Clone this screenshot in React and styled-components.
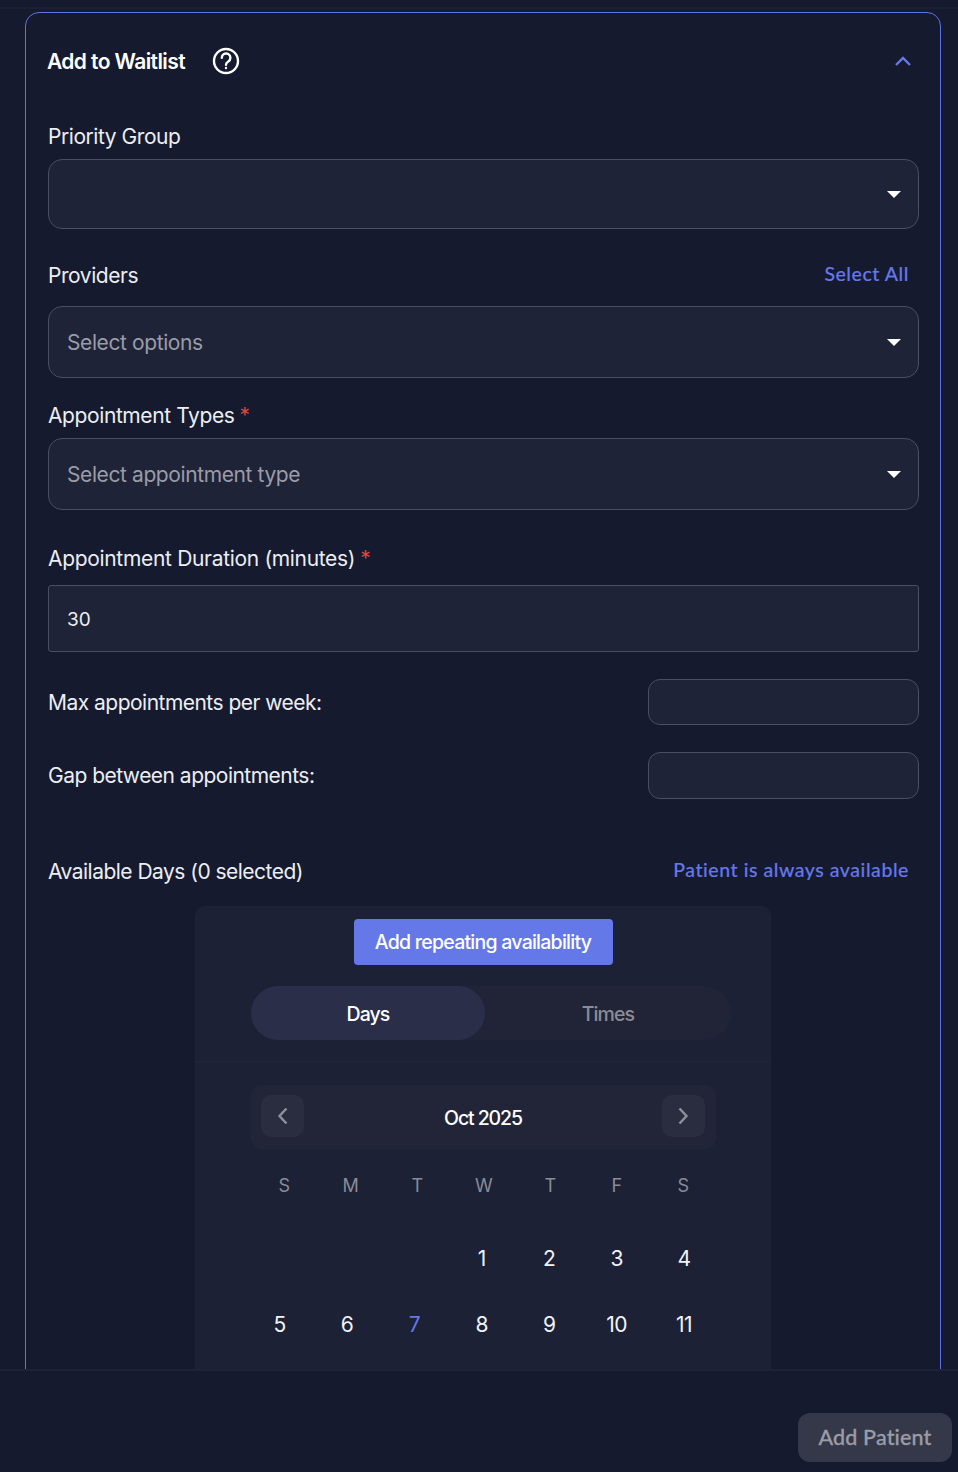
import React from "react";
import styled, { createGlobalStyle } from "styled-components";

const GlobalStyle = createGlobalStyle`
  html, body {
    margin: 0;
    padding: 0;
    background: #151a2f;
    font-family: Inter, "Liberation Sans", sans-serif;
  }
  * { box-sizing: border-box; }
`;

const Page = styled.div`
  width: 958px;
  height: 1472px;
  display: flex;
  flex-direction: column;
  background: #151a2f;
  overflow: hidden;
`;

const Scroll = styled.div`
  height: 1371px;
  flex: none;
  overflow: hidden;
  padding: 12px 17px 0 25px;
  border-bottom: 2px solid #1e2236;
  position: relative;
  &::before {
    content: "";
    position: absolute;
    top: 7px;
    left: 0;
    right: 0;
    height: 2px;
    background: #1b2034;
  }
`;

const Panel = styled.section`
  width: 916px;
  border: 1px solid #5e73e6;
  border-radius: 14px;
  padding: 0 21px 0 22px;
`;

const Header = styled.div`
  height: 96px;
  display: flex;
  align-items: center;
  justify-content: space-between;
  padding-right: 8px;
`;

const TitleWrap = styled.div`
  display: flex;
  align-items: center;
  gap: 27px;
`;

const Title = styled.h2`
  margin: 0 0 0 -1px;
  font-size: 21px;
  font-weight: 600;
  letter-spacing: -0.6px;
  color: #fff;
`;

const LabelRow = styled.div`
  display: flex;
  align-items: center;
  justify-content: space-between;
  height: 24px;
  margin-top: ${(p) => p.$top}px;
  margin-bottom: ${(p) => p.$bottom}px;
  padding-right: 10px;
`;

const Label = styled.label`
  font-size: 21px;
  letter-spacing: ${(p) => p.$spacing || -0.52}px;
  color: #eceef2;
  white-space: nowrap;
`;

const Star = styled.span`
  color: #d9473f;
  margin-left: 5px;
`;

const LinkText = styled.a`
  margin-top: -4px;
  font-family: Lato, Inter, sans-serif;
  font-size: 19.5px;
  font-weight: 500;
  letter-spacing: 0.55px;
  -webkit-text-stroke: 0.15px #6478e8;
  color: #6478e8;
`;

const Select = styled.div`
  height: ${(p) => p.$height}px;
  display: flex;
  align-items: center;
  justify-content: space-between;
  padding: 1px 17px 0 18px;
  background: #1f2337;
  border: 1px solid #4b4d60;
  border-radius: 14px;
  font-size: 21px;
  letter-spacing: -0.4px;
  color: #9a9ca8;
`;

const Caret = styled.span`
  width: 0;
  height: 0;
  margin-top: -1px;
  border-left: 7px solid transparent;
  border-right: 7px solid transparent;
  border-top: 7px solid #fff;
`;

const DurationInput = styled.div`
  height: 67px;
  display: flex;
  align-items: center;
  padding: 1px 0 0 18px;
  background: #1f2337;
  border: 1px solid #4b4d60;
  border-radius: 3px;
  font-size: 19px;
  color: #eceef2;
`;

const InlineField = styled.div`
  display: flex;
  align-items: center;
  justify-content: space-between;
  height: ${(p) => p.$height}px;
  margin-top: ${(p) => p.$top}px;
`;

const SmallInput = styled.div`
  width: 271px;
  height: 100%;
  background: #1f2337;
  border: 1px solid #4b4d60;
  border-radius: 12px;
`;

const Card = styled.div`
  width: 576px;
  margin: 23px auto 0 147px;
  padding: 12px 0 120px;
  background: #1c2135;
  border: 1px solid #1f2338;
  border-radius: 10px;
`;

const AddButton = styled.button`
  display: block;
  width: 259px;
  height: 46px;
  margin: 0 auto;
  border: none;
  border-radius: 4px;
  background: #6478e8;
  color: #fff;
  font-family: inherit;
  font-size: 19.5px;
  font-weight: 500;
  letter-spacing: -0.75px;
`;

const Tabs = styled.div`
  width: 480px;
  height: 54px;
  margin: 21px 0 0 55px;
  display: grid;
  grid-template-columns: 234px 1fr;
  background: #212437;
  border-radius: 27px;
`;

const Tab = styled.div`
  display: flex;
  align-items: center;
  justify-content: center;
  padding-top: 2px;
  border-radius: 27px;
  font-size: 19.5px;
  font-weight: 500;
  letter-spacing: -0.9px;
  background: ${(p) => (p.$active ? "#2a2e49" : "transparent")};
  color: ${(p) => (p.$active ? "#fff" : "#8a8c98")};
`;

const Divider = styled.div`
  height: 2px;
  margin-top: 21px;
  background: #20243a;
`;

const MonthBar = styled.div`
  width: 465px;
  height: 64px;
  margin: 22px 0 0 55px;
  padding: 0 11px 0 10px;
  display: flex;
  align-items: center;
  justify-content: space-between;
  background: #222538;
  border-radius: 10px;
`;

const NavButton = styled.div`
  width: 43px;
  height: 42px;
  margin-top: -2px;
  display: flex;
  align-items: center;
  justify-content: center;
  background: #2a2d40;
  border-radius: 10px;
  color: #8d8f9b;
`;

const MonthName = styled.div`
  padding-top: 2px;
  font-size: 19.5px;
  font-weight: 500;
  letter-spacing: -1.1px;
  color: #fff;
`;

const WeekRow = styled.div`
  width: 465px;
  margin: 25px 0 0 55px;
  display: grid;
  grid-template-columns: repeat(7, 66.5px);
`;

const WeekDay = styled.div`
  text-align: center;
  font-size: 18px;
  line-height: 24px;
  color: #8a8c98;
`;

const DateGrid = styled.div`
  width: 472px;
  margin: 27px 0 0 50px;
  display: grid;
  grid-template-columns: repeat(7, 67.4px);
  grid-auto-rows: 66px;
`;

const DateCell = styled.div`
  display: flex;
  align-items: center;
  justify-content: center;
  font-size: 21px;
  letter-spacing: -0.5px;
  color: ${(p) => (p.$today ? "#6478e8" : "#f2f3f6")};
`;

const Footer = styled.footer`
  flex: 1;
  display: flex;
  justify-content: flex-end;
  align-items: flex-start;
  padding: 42px 6px 0 0;
`;

const SubmitButton = styled.button`
  width: 154px;
  height: 49px;
  padding: 0 0 2px;
  border: none;
  border-radius: 12px;
  background: #343849;
  color: #9a9ca6;
  font-family: Lato, Inter, sans-serif;
  font-size: 21.5px;
  font-weight: 500;
  letter-spacing: 0.15px;
  -webkit-text-stroke: 0.3px #9a9ca6;
`;

const HelpIcon = () => (
  <svg width="28" height="28" viewBox="0 0 28 28" fill="none" stroke="#fff" strokeWidth="2.4" strokeLinecap="round">
    <circle cx="14" cy="14" r="12" />
    <path d="M9.8 10.8a4.3 4.3 0 1 1 6.5 3.7c-1.4.8-2.3 1.5-2.3 3.2" />
    <circle cx="14" cy="21" r="0.5" fill="#fff" strokeWidth="1.4" />
  </svg>
);

const Chevron = ({ d, color = "currentColor", stroke = 2.4 }) => (
  <svg width="16" height="16" viewBox="0 0 16 16" fill="none" stroke={color} strokeWidth={stroke}>
    <path d={d} />
  </svg>
);

const weekDays = ["S", "M", "T", "W", "T", "F", "S"];
const blanks = [0, 1, 2];
const dates = [1, 2, 3, 4, 5, 6, 7, 8, 9, 10, 11];

export default function App() {
  return (
    <Page>
      <GlobalStyle />
      <Scroll>
        <Panel>
          <Header>
            <TitleWrap>
              <Title>Add to Waitlist</Title>
              <HelpIcon />
            </TitleWrap>
            <Chevron d="M1 12 L8 5 L15 12" color="#6478e8" />
          </Header>

          <LabelRow $top={15} $bottom={11}>
            <Label $spacing={-0.45}>Priority Group</Label>
          </LabelRow>
          <Select $height={70}>
            <span />
            <Caret />
          </Select>

          <LabelRow $top={34} $bottom={19}>
            <Label $spacing={-0.45}>Providers</Label>
            <LinkText>Select All</LinkText>
          </LabelRow>
          <Select $height={72}>
            <span>Select options</span>
            <Caret />
          </Select>

          <LabelRow $top={25} $bottom={11}>
            <Label $spacing={-0.4}>
              Appointment Types<Star>*</Star>
            </Label>
          </LabelRow>
          <Select $height={72}>
            <span>Select appointment type</span>
            <Caret />
          </Select>

          <LabelRow $top={36} $bottom={15}>
            <Label $spacing={-0.32}>
              Appointment Duration (minutes)<Star>*</Star>
            </Label>
          </LabelRow>
          <DurationInput>30</DurationInput>

          <InlineField $height={46} $top={27}>
            <Label>Max appointments per week:</Label>
            <SmallInput />
          </InlineField>
          <InlineField $height={47} $top={27}>
            <Label>Gap between appointments:</Label>
            <SmallInput />
          </InlineField>

          <LabelRow $top={60} $bottom={0}>
            <Label>Available Days (0 selected)</Label>
            <LinkText>Patient is always available</LinkText>
          </LabelRow>

          <Card>
            <AddButton>Add repeating availability</AddButton>
            <Tabs>
              <Tab $active>Days</Tab>
              <Tab>Times</Tab>
            </Tabs>
            <Divider />
            <MonthBar>
              <NavButton>
                <Chevron d="M11.5 0.5 L4.5 8 L11.5 15.5" />
              </NavButton>
              <MonthName>Oct 2025</MonthName>
              <NavButton>
                <Chevron d="M4.5 0.5 L11.5 8 L4.5 15.5" />
              </NavButton>
            </MonthBar>
            <WeekRow>
              {weekDays.map((day, i) => (
                <WeekDay key={i}>{day}</WeekDay>
              ))}
            </WeekRow>
            <DateGrid>
              {blanks.map((b) => (
                <DateCell key={"blank" + b} />
              ))}
              {dates.map((d) => (
                <DateCell key={d} $today={d === 7}>
                  {d}
                </DateCell>
              ))}
            </DateGrid>
          </Card>
        </Panel>
      </Scroll>
      <Footer>
        <SubmitButton>Add Patient</SubmitButton>
      </Footer>
    </Page>
  );
}
